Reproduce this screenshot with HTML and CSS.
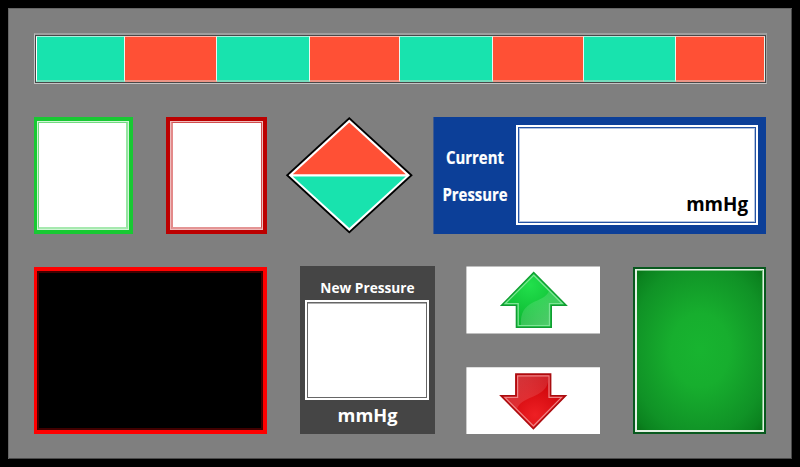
FILE: index.html
```html
<!DOCTYPE html>
<html lang="en">
<head>
<meta charset="utf-8">
<title>Pressure panel</title>
<link rel="stylesheet" href="styles.css">
</head>
<body>
<main class="panel">
  <div class="strip">
    <i class="cell teal"></i><i class="cell coral"></i><i class="cell teal"></i><i class="cell coral"></i><i class="cell teal"></i><i class="cell coral"></i><i class="cell teal"></i><i class="cell coral"></i>
  </div>
  <section class="row top">
    <div class="box box-green"><div class="line"><div class="fill"></div></div></div>
    <div class="box box-red"><div class="line"><div class="fill"></div></div></div>
    <svg class="diamond" width="128" height="118" viewBox="285 117 128 118">
      <path d="M349.3 118 412.8 176.2 349.3 234.4 285.8 176.2Z" fill="#000"/>
      <path d="M349.3 120.4 410 176.2 349.3 232 288.6 176.2Z" fill="#fff"/>
      <path d="M349.3 123.4 405.8 175.2H292.8Z" fill="#ff5035"/>
      <path d="M349.3 229 405.8 177.6H292.8Z" fill="#18e3ae"/>
    </svg>
    <div class="current">
      <div class="label"><span>Current</span><span>Pressure</span></div>
      <div class="screen"><div class="inner"><span class="unit">mmHg</span></div></div>
    </div>
  </section>
  <section class="row bottom">
    <div class="display"><div class="display-in"></div></div>
    <div class="new">
      <div class="new-title"><span>New Pressure</span></div>
      <div class="new-screen"><div class="new-inner"></div></div>
      <div class="new-unit"><span>mmHg</span></div>
    </div>
    <div class="arrows">
      <svg class="arrow" width="134" height="68" viewBox="466 266 134 68">
        <defs>
          <radialGradient id="gu" gradientUnits="userSpaceOnUse" cx="530" cy="285" r="38"><stop offset="0" stop-color="#22e04c"/><stop offset="1" stop-color="#0cb932"/></radialGradient>
          <linearGradient id="su" x1="0" y1="0" x2="1" y2="1"><stop offset="0" stop-color="#fff" stop-opacity=".02"/><stop offset="1" stop-color="#fff" stop-opacity=".34"/></linearGradient>
        </defs>
        <path d="M466.4 266.5H600V333.5H466.4Z" fill="#fff"/>
        <path d="M533.7 272.6 566.2 305.3H551.3V327.4H516.4V305.3H501.5Z" fill="url(#gu)" stroke="#109d32" stroke-width="1.4"/>
        <path d="M549 291 563 303.5H549.5V325.5H521C519 298 544 304 549 291Z" fill="url(#su)"/>
        <path d="M533.7 275.3 562.4 303.7H549.5V325.6H518.2V303.7H505.2Z" fill="none" stroke="#7de394" stroke-width="1.3"/>
      </svg>
      <svg class="arrow" width="134" height="68" viewBox="466 367 134 68">
        <defs>
          <radialGradient id="gd" gradientUnits="userSpaceOnUse" cx="535" cy="415" r="40"><stop offset="0" stop-color="#ee2024"/><stop offset="1" stop-color="#c90006"/></radialGradient>
          <linearGradient id="sd" x1="1" y1="1" x2="0" y2="0"><stop offset="0" stop-color="#fff" stop-opacity=".04"/><stop offset="1" stop-color="#fff" stop-opacity=".24"/></linearGradient>
        </defs>
        <path d="M466.4 367.3H600V434H466.4Z" fill="#fff"/>
        <path d="M533.4 428.7 565.7 395.7H550.7V374H515.8V395.7H500.8Z" fill="url(#gd)" stroke="#a90d10" stroke-width="1.4"/>
        <path d="M518 376H548V382C545 398 521 396 517 409L505 397.4H518Z" fill="url(#sd)"/>
        <path d="M533.4 426 561.6 397.4H549V375.8H517.6V397.4H504.8Z" fill="none" stroke="#ee8586" stroke-width="1.2"/>
      </svg>
    </div>
    <div class="start"><div class="start-in"></div></div>
  </section>
</main>
</body>
</html>
```
FILE: styles.css
```css
* { box-sizing: border-box; }
body { margin: 0; background: #000; font-family: "Open Sans", "Noto Sans", sans-serif; font-weight: 700; }
.panel {
  width: 784px; height: 451px; margin: 8px 0 0 8px; padding: 25px 25px 0 26px;
  background: #7f7f7f; box-shadow: inset 1px 1px #666, inset -1px -1px #4a4a4a;
}
.strip {
  display: grid; grid-template-columns: 89px 92px 93px 90px 93px 91px 92px 89px;
  width: 733px; height: 51px; padding: 1px; background: #484848;
  border: 1px solid #c4c4c4; border-top: 2px solid #9f9f9f; border-right-color: #a3a3a3;
}
.cell { border-right: 1px solid #e9f6ef; border-top: 1px solid #a8f2dd; border-bottom: 2px solid #72ddbd; }
.cell:first-child { border-left: 1px solid #fff; }
.teal { background: #18e3ae; }
.coral { background: #ff5035; border-top-color: #ffb9ad; border-bottom-color: #ec9384; }

.row { display: flex; }
.top { margin-top: 33px; height: 117px; }
.bottom { margin-top: 32px; height: 169px; }

.box { height: 117px; border: 4px solid; }
.box .line { height: 100%; border: 1px solid; }
.box .fill { height: 100%; background: #fff; border: 1px solid; }
.box-green { width: 99px; border-color: #18c933; border-left-width: 3px; }
.box-green .line { border-color: #d2f5d7; }
.box-green .fill { border-color: #72db81; border-right: 2px solid #95e5a0; border-bottom: 2px solid #a6e9af; }
.box-red { width: 101px; margin-left: 33px; border-color: #bc0000; }
.box-red .line { border-color: #eebcbc; }
.box-red .fill { border-color: #d14d4d; border-left: 2px solid #e38a8a; border-bottom: 2px solid #e49595; }

.diamond { display: block; flex: none; margin: -1px 0 0 18px; }

.current { display: flex; width: 333px; height: 117px; margin-left: 20px; background: #0c3f98; padding: 8px 8px 8px 0; box-shadow: inset 1px 0 #3f5a8e; }
.label { width: 83px; padding: 20px 0 0 1px; }
.label span { display: block; text-align: center; color: #fff; font-size: 17.5px; line-height: 24px; transform: scaleX(.85); -webkit-text-stroke: .2px #fff; }
.label span + span { margin-top: 13px; }
.screen { width: 242px; height: 100px; border: 2px solid #fff; background: #2453a5; padding: 1px; }
.inner { display: flex; justify-content: flex-end; align-items: flex-end; height: 100%; background: #fff; border: 1px solid #b3c3e0; padding: 0 6px 2px 0; }
.unit { color: #000; font-size: 18.8px; line-height: 30px; }

.display { width: 233px; height: 167px; margin-top: 1px; background: #000; border: 4px solid #f00; border-left-width: 3px; }
.display-in { height: 100%; border: 2px solid #410000; }

.new { width: 135px; height: 168px; margin-left: 33px; background: #454545; display: flex; flex-direction: column; align-items: center; color: #fff; }
.new-title { height: 34px; font-size: 13.7px; line-height: 43px; white-space: nowrap; }
.new-screen { width: 124px; height: 100px; border: 2px solid #fff; background: #666; padding: 1px; margin-right: 1px; }
.new-inner { height: 100%; background: #fff; border-top: 1px solid #b0b0b0; }
.new-unit { font-size: 18.2px; line-height: 31px; }

.new-title span, .new-unit span { display: inline-block; }

.arrows { width: 134px; margin-left: 31px; display: flex; flex-direction: column; gap: 33px; }
.arrow { display: block; }

.start { width: 133px; height: 167px; margin: 1px 0 0 33px; border: 2px solid #08591e; }
.start-in {
  height: 100%; border: 1px solid #e4f2e4; border-left-width: 2px; border-bottom-width: 2px; box-shadow: inset -1px 1px #7fc489;
  background: radial-gradient(ellipse 98px 122px at 50% 50%, #18b430 0%, #17ae2e 30%, #109226 70%, #0b831f 84%, #06610f 100%);
}
```
